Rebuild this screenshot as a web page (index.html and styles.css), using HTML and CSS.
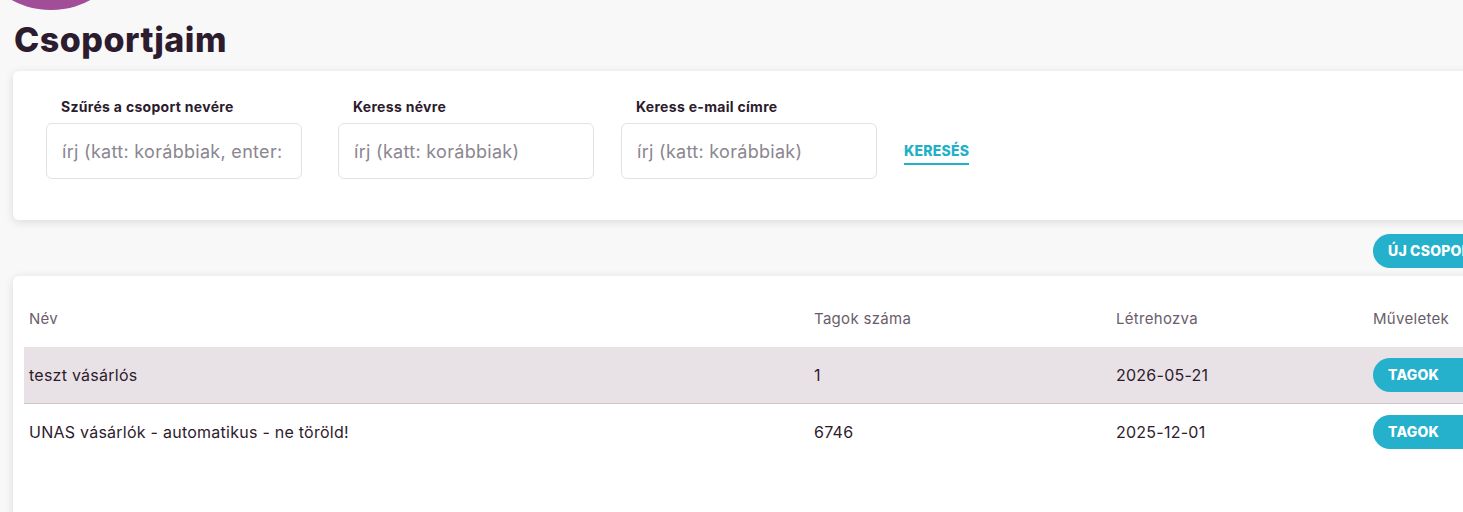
FILE: index.html
```html
<html>
<head>
  <meta charset="utf-8">
  <title>Csoportjaim</title>
  <link rel="stylesheet" href="styles.css">
</head>
<body>
  <div class="blob"></div>

  <div id="content">
    <h1 class="page-title">Csoportjaim</h1>

    <section class="card filter-card">
      <div class="field field-first">
        <label>Szűrés a csoport nevére</label>
        <input type="text" placeholder="írj (katt: korábbiak, enter: mind)">
      </div>
      <div class="field">
        <label>Keress névre</label>
        <input type="text" placeholder="írj (katt: korábbiak)">
      </div>
      <div class="field">
        <label>Keress e-mail címre</label>
        <input type="text" placeholder="írj (katt: korábbiak)">
      </div>
      <a href="#" class="search-link">KERESÉS</a>
    </section>

    <div class="toolbar">
      <a href="#" class="btn btn-new">ÚJ CSOPORT</a>
    </div>

    <section class="card table-card">
      <table class="groups">
        <colgroup>
          <col class="col-name">
          <col class="col-count">
          <col class="col-date">
          <col class="col-actions">
        </colgroup>
        <thead>
          <tr>
            <th>Név</th>
            <th>Tagok száma</th>
            <th>Létrehozva</th>
            <th>Műveletek</th>
          </tr>
        </thead>
        <tbody>
          <tr class="active">
            <td>teszt vásárlós</td>
            <td>1</td>
            <td>2026-05-21</td>
            <td><a href="#" class="btn btn-row">TAGOK</a></td>
          </tr>
          <tr>
            <td>UNAS vásárlók - automatikus - ne töröld!</td>
            <td>6746</td>
            <td>2025-12-01</td>
            <td><a href="#" class="btn btn-row">TAGOK</a></td>
          </tr>
        </tbody>
      </table>
    </section>
  </div>
</body>
</html>
```

FILE: styles.css
```css
body {
  margin: 0;
  font-family: 'Inter', 'Open Sans', sans-serif;
  color: #2d1b2e;
  background-color: #f8f8f8;
  overflow: hidden;
}

/* purple corner decoration */
.blob {
  position: absolute;
  left: -14px;
  top: -88px;
  width: 130px;
  height: 98px;
  border-radius: 50%;
  background-color: #a24d98;
}

#content {
  width: 1500px;
  padding: 0 0 0 13px;
}

.page-title {
  margin: 20px 0 12px 1px;
  font-size: 34px;
  line-height: 39px;
  font-weight: 800;
  letter-spacing: 0.5px;
  color: #2d1b2e;
}

.card {
  background-color: #fff;
  border-radius: 6px;
  box-shadow: 0 2px 10px rgba(0, 0, 0, 0.12);
}

/* filter box */
.filter-card {
  display: flex;
  align-items: flex-end;
  height: 149px;
  box-sizing: border-box;
  padding: 26px 0 41px 33px;
}

.field {
  display: flex;
  flex-direction: column;
  margin-right: 27px;
}

.field-first {
  margin-right: 36px;
}

.field label {
  padding-left: 15px;
  margin-bottom: 6px;
  font-size: 14px;
  line-height: 20px;
  font-weight: 700;
  letter-spacing: 0.3px;
  color: #2d1b2e;
}

.field input {
  width: 256px;
  height: 56px;
  box-sizing: border-box;
  padding: 0 15px;
  border: 1px solid #e2e2e2;
  border-radius: 6px;
  font-family: inherit;
  font-size: 18px;
  letter-spacing: 0.3px;
  color: #2d1b2e;
  outline: none;
}

.field input::placeholder {
  color: #8b8690;
}

.search-link {
  align-self: center;
  margin-top: 30px;
  padding-bottom: 2px;
  font-size: 14px;
  line-height: 20px;
  font-weight: 800;
  letter-spacing: 0.2px;
  color: #22b0c9;
  text-decoration: none;
  border-bottom: 2px solid #22b0c9;
}

/* buttons */
.btn {
  display: inline-block;
  box-sizing: border-box;
  height: 34px;
  line-height: 34px;
  padding: 0 15px;
  border-radius: 17px;
  background-color: #25b1cb;
  color: #fff;
  font-size: 14px;
  font-weight: 800;
  letter-spacing: 0.2px;
  text-decoration: none;
}

.toolbar {
  display: flex;
  justify-content: flex-end;
  padding: 14px 0 8px 0;
}

.btn-new {
  width: 140px;
}

.btn-row {
  width: 110px;
}

/* groups table */
.table-card {
  min-height: 260px;
  padding: 20px 0 0 11px;
}

.groups {
  width: 100%;
  border-collapse: collapse;
  font-size: 16px;
  letter-spacing: 0.25px;
}

.col-name { width: 785px; }
.col-count { width: 302px; }
.col-date { width: 257px; }

.groups th {
  padding: 12px 5px 18px 5px;
  font-size: 15px;
  line-height: 21px;
  font-weight: 400;
  letter-spacing: 0.3px;
  text-align: left;
  color: #6a5d6b;
}

.groups td {
  padding: 11px 5px;
  line-height: 34px;
  border-bottom: 1px solid #d6d0d4;
}

.groups tr:last-child td {
  border-bottom: none;
}

.groups tr.active td {
  background-color: #e8e2e6;
  border-bottom-color: #cdc5ca;
}
```
